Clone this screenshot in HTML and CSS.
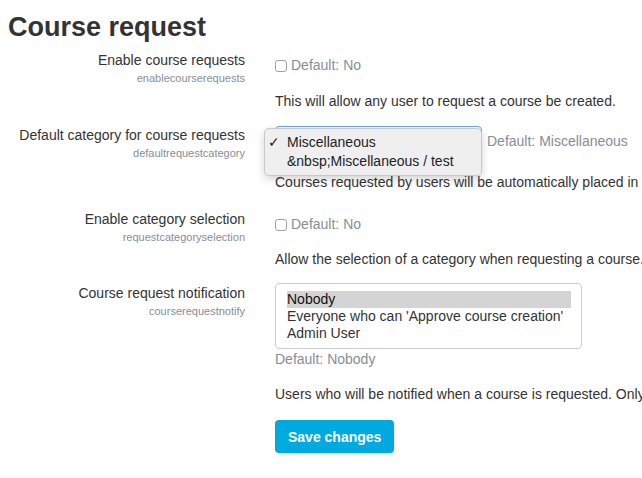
FILE: index.html
```html
<!DOCTYPE html>
<html>
<head>
<meta charset="utf-8">
<link rel="stylesheet" href="styles.css">
</head>
<body>
<h2 class="title">Course request</h2>
<div class="settings">
  <div class="setting">
    <div class="label-col">
      <div class="label">Enable course requests</div>
      <div class="sub">enablecourserequests</div>
    </div>
    <div class="content">
      <div class="check-line"><span class="checkbox"></span><span class="default">Default: No</span></div>
      <div class="desc">This will allow any user to request a course be created.</div>
    </div>
  </div>
  <div class="setting setting-select">
    <div class="label-col">
      <div class="label">Default category for course requests</div>
      <div class="sub">defaultrequestcategory</div>
    </div>
    <div class="content">
      <div class="select-line">
        <div class="select-wrap">
          <div class="select"></div>
          <div class="popup">
            <div class="popup-item"><span class="tick">✓</span>Miscellaneous</div>
            <div class="popup-item"><span class="tick"></span>&amp;nbsp;Miscellaneous / test</div>
          </div>
        </div>
        <span class="default">Default: Miscellaneous</span>
      </div>
      <div class="desc desc-select">Courses requested by users will be automatically placed in this category.</div>
    </div>
  </div>
  <div class="setting">
    <div class="label-col">
      <div class="label">Enable category selection</div>
      <div class="sub">requestcategoryselection</div>
    </div>
    <div class="content">
      <div class="check-line"><span class="checkbox"></span><span class="default">Default: No</span></div>
      <div class="desc desc-tight">Allow the selection of a category when requesting a course.</div>
    </div>
  </div>
  <div class="setting">
    <div class="label-col">
      <div class="label">Course request notification</div>
      <div class="sub">courserequestnotify</div>
    </div>
    <div class="content">
      <div class="multi">
        <div class="option selected">Nobody</div>
        <div class="option">Everyone who can 'Approve course creation'</div>
        <div class="option">Admin User</div>
      </div>
      <div class="default default-block">Default: Nobody</div>
      <div class="desc desc-multi">Users who will be notified when a course is requested. Only users who can approve course requests are listed here.</div>
      <button class="btn">Save changes</button>
    </div>
  </div>
</div>
</body>
</html>
```

FILE: styles.css
```css
html, body {
  overflow: hidden;
}
body {
  margin: 0;
  background: #fff;
  color: #333;
  font-family: "Liberation Sans", Arial, Helvetica, sans-serif;
  font-size: 14px;
}
.title {
  margin: 0;
  padding: 12px 0 0 8px;
  font-size: 27px;
  line-height: 31px;
  font-weight: bold;
  color: #333;
}
.settings {
  padding-top: 7px;
}
.setting {
  display: grid;
  grid-template-columns: 245px 1fr;
  column-gap: 30px;
  margin-bottom: 14px;
}
.setting-select {
  margin-bottom: 17px;
}
.label-col {
  text-align: right;
}
.label {
  line-height: 20px;
  color: #333;
}
.sub {
  font-size: 11px;
  line-height: 16px;
  color: #868e96;
}
.content {
  min-width: 0;
}
.check-line {
  display: flex;
  align-items: center;
  margin-top: 5px;
  line-height: 20px;
  white-space: nowrap;
}
.checkbox {
  display: inline-block;
  width: 10px;
  height: 10px;
  border: 1px solid #a0a0a0;
  border-radius: 3px;
  background: #fff;
  margin: 1px 4px 0 0;
}
.default {
  color: #868e96;
}
.desc {
  margin-top: 16px;
  line-height: 20px;
  white-space: nowrap;
}
.desc-tight {
  margin-top: 15px;
}
.select-line {
  display: flex;
  align-items: center;
  margin-top: 1px;
  white-space: nowrap;
}
.select-line .default {
  position: relative;
  top: -2px;
}
.select-wrap {
  position: relative;
  width: 207px;
  height: 34px;
  margin-right: 5px;
}
.select {
  box-sizing: border-box;
  width: 100%;
  height: 100%;
  border: 1px solid #6aa6e4;
  border-radius: 4px;
  background: #fff;
}
.popup {
  position: absolute;
  left: -11px;
  top: 2px;
  width: 218px;
  box-sizing: border-box;
  padding: 4px 0 4px;
  background: #efefef;
  border: 1px solid #c9c9c9;
  border-radius: 5px;
  box-shadow: 0 3px 8px rgba(0, 0, 0, 0.18);
  color: #222;
}
.popup-item {
  display: flex;
  line-height: 19px;
}
.tick {
  display: inline-block;
  width: 22px;
  padding-left: 3px;
  box-sizing: border-box;
}
.desc-select {
  margin-top: 12px;
}
.multi {
  box-sizing: border-box;
  width: 307px;
  height: 66px;
  border: 1px solid #ccc;
  border-radius: 4px;
  padding: 7px 10px 0 11px;
  background: #fff;
}
.option {
  line-height: 17px;
  height: 17px;
  color: #333;
  white-space: nowrap;
}
.option.selected {
  background: #d4d4d4;
  color: #111;
}
.default-block {
  line-height: 20px;
}
.desc-multi {
  margin-top: 15px;
}
.btn {
  display: block;
  margin-top: 16px;
  height: 33px;
  padding: 0 13px;
  border: 0;
  border-radius: 4px;
  background: #00a9df;
  color: #fff;
  font-family: "Liberation Sans", Arial, Helvetica, sans-serif;
  font-size: 14px;
  font-weight: bold;
}
```
